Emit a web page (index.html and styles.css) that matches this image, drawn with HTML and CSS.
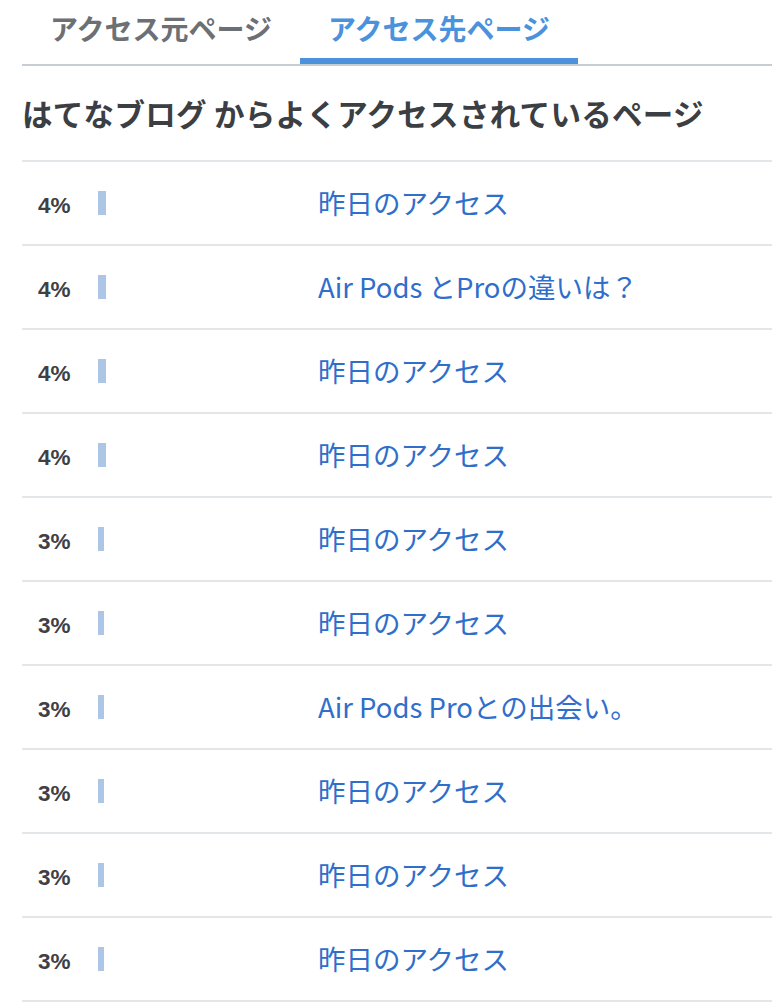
FILE: index.html
```html
<!DOCTYPE html>
<html lang="ja">
<head>
<meta charset="utf-8">
<link rel="stylesheet" href="styles.css">
</head>
<body>
<div class="page">
  <nav class="tabs">
    <div class="tab">アクセス元ページ</div>
    <div class="tab active">アクセス先ページ</div>
  </nav>
  <h2 class="title">はてなブログ からよくアクセスされているページ</h2>
  <ul class="list">
    <li class="row"><span class="pct">4%</span><span class="barcell"><span class="bar" style="width:8px"></span></span><a class="link">昨日のアクセス</a></li>
    <li class="row"><span class="pct">4%</span><span class="barcell"><span class="bar" style="width:8px"></span></span><a class="link">Air Pods とProの違いは？</a></li>
    <li class="row"><span class="pct">4%</span><span class="barcell"><span class="bar" style="width:8px"></span></span><a class="link">昨日のアクセス</a></li>
    <li class="row"><span class="pct">4%</span><span class="barcell"><span class="bar" style="width:8px"></span></span><a class="link">昨日のアクセス</a></li>
    <li class="row"><span class="pct">3%</span><span class="barcell"><span class="bar" style="width:6px"></span></span><a class="link">昨日のアクセス</a></li>
    <li class="row"><span class="pct">3%</span><span class="barcell"><span class="bar" style="width:6px"></span></span><a class="link">昨日のアクセス</a></li>
    <li class="row"><span class="pct">3%</span><span class="barcell"><span class="bar" style="width:6px"></span></span><a class="link">Air Pods Proとの出会い。</a></li>
    <li class="row"><span class="pct">3%</span><span class="barcell"><span class="bar" style="width:6px"></span></span><a class="link">昨日のアクセス</a></li>
    <li class="row"><span class="pct">3%</span><span class="barcell"><span class="bar" style="width:6px"></span></span><a class="link">昨日のアクセス</a></li>
    <li class="row"><span class="pct">3%</span><span class="barcell"><span class="bar" style="width:6px"></span></span><a class="link">昨日のアクセス</a></li>
  </ul>
</div>
</body>
</html>
```

FILE: styles.css
```css
html, body {
  margin: 0;
  padding: 0;
  background: #ffffff;
}
body {
  font-family: "Noto Sans CJK JP", "Noto Sans", sans-serif;
}
.page {
  padding-left: 22px;
}
.tabs {
  display: flex;
  height: 64px;
  border-bottom: 2px solid #c6cdd5;
}
.tab {
  width: 278px;
  display: flex;
  align-items: center;
  justify-content: center;
  font-size: 28px;
  font-weight: 700;
  color: #6c7075;
  box-sizing: border-box;
  padding-bottom: 8px;
}
.tab.active {
  color: #4a92dc;
  border-bottom: 6px solid #4a92dc;
  padding-bottom: 2px;
}
.title {
  margin: 0;
  height: 94px;
  display: flex;
  align-items: center;
  font-size: 30.5px;
  font-weight: 700;
  color: #3b3e42;
  letter-spacing: 0.3px;
  border-bottom: 2px solid #e3e7ea;
}
.list {
  list-style: none;
  margin: 0;
  padding: 0;
}
.row {
  display: flex;
  align-items: center;
  height: 82px;
  border-bottom: 2px solid #e3e7ea;
  padding-left: 16px;
}
.pct {
  width: 60px;
  font-family: "Liberation Sans", "Noto Sans", sans-serif;
  font-weight: 700;
  font-size: 22.5px;
  color: #3e4044;
  padding-top: 6px;
}
.barcell {
  width: 220px;
  display: flex;
  align-items: center;
}
.bar {
  display: block;
  height: 24px;
  background: #adc6e6;
}
.link {
  font-size: 27.5px;
  color: #2f6ecb;
  text-decoration: none;
  padding-bottom: 3px;
}
```
